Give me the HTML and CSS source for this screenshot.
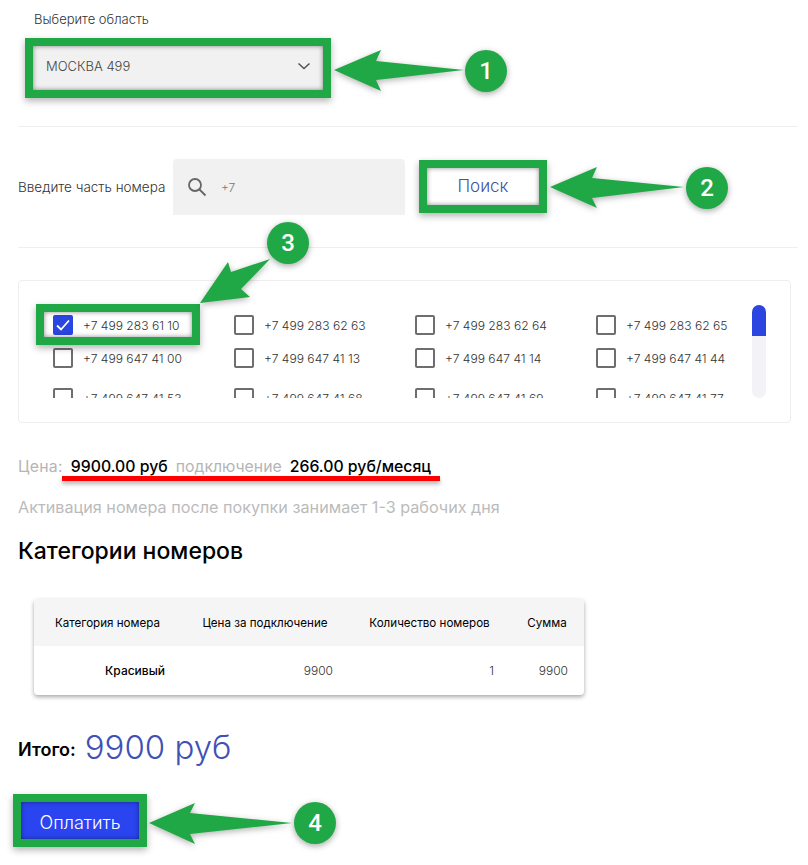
FILE: index.html
```html
<!DOCTYPE html>
<html lang="ru">

<head>
    <meta charset="UTF-8">
    <meta name="viewport" content="width=device-width, initial-scale=1.0">
    <title>Выбор номера</title>
    <link rel="stylesheet" href="styles.css">
</head>

<body>
    <div class="page">
        <div class="region">
            <p class="region-label">Выберите область</p>
            <div class="select marked">
                <span>МОСКВА 499</span>
                <svg class="chevron" width="14" height="8" viewBox="0 0 14 8"><path d="M1.5 1.5 7 6.5l5.5-5" fill="none" stroke="#555" stroke-width="1.5"/></svg>
            </div>
        </div>
        <hr class="divider">
        <div class="search">
            <span class="search-label">Введите часть номера</span>
            <div class="search-input">
                <svg width="20" height="20" viewBox="0 0 20 20"><circle cx="8" cy="8" r="6" fill="none" stroke="#666" stroke-width="1.8"/><path d="m12.5 12.5 6 6" stroke="#666" stroke-width="1.8"/></svg>
                <span>+7</span>
            </div>
            <button class="search-btn marked">Поиск</button>
        </div>
        <hr class="divider">
        <div class="card">
            <div class="numbers">
                <div class="numbers-row">
                    <label class="number"><span class="check checked"><svg width="14" height="12" viewBox="0 0 14 12"><path d="M1 6.5 5 10.5 13 1.5" fill="none" stroke="#fff" stroke-width="1.8"/></svg></span>+7 499 283 61 10</label>
                    <label class="number"><span class="check"></span>+7 499 283 62 63</label>
                    <label class="number"><span class="check"></span>+7 499 283 62 64</label>
                    <label class="number"><span class="check"></span>+7 499 283 62 65</label>
                </div>
                <div class="numbers-row wide">
                    <label class="number"><span class="check"></span>+7 499 647 41 00</label>
                    <label class="number"><span class="check"></span>+7 499 647 41 13</label>
                    <label class="number"><span class="check"></span>+7 499 647 41 14</label>
                    <label class="number"><span class="check"></span>+7 499 647 41 44</label>
                </div>
                <div class="numbers-row">
                    <label class="number"><span class="check"></span>+7 499 647 41 53</label>
                    <label class="number"><span class="check"></span>+7 499 647 41 68</label>
                    <label class="number"><span class="check"></span>+7 499 647 41 69</label>
                    <label class="number"><span class="check"></span>+7 499 647 41 77</label>
                </div>
            </div>
            <div class="scrollbar"><div class="scrollbar-thumb"></div></div>
        </div>
        <p class="price">
            <span>Цена:</span><b>9900.00 руб</b><span>подключение</span><b>266.00 руб/месяц</b>
        </p>
        <p class="note">Активация номера после покупки занимает 1-3 рабочих дня</p>
        <h2 class="title">Категории номеров</h2>
        <div class="table-wrap">
            <table class="table">
                <thead>
                    <tr>
                        <th class="col-1">Категория номера</th>
                        <th class="col-2">Цена за подключение</th>
                        <th class="col-3">Количество номеров</th>
                        <th class="col-4">Сумма</th>
                    </tr>
                </thead>
                <tbody>
                    <tr>
                        <td class="category">Красивый</td>
                        <td>9900</td>
                        <td>1</td>
                        <td>9900</td>
                    </tr>
                </tbody>
            </table>
        </div>
        <div class="total">
            <span class="total-label">Итого:</span>
            <span class="total-sum">9900 руб</span>
        </div>
        <button class="pay marked">Оплатить</button>

        <!-- пометки поверх скриншота -->
        <div class="number-frame marked"></div>
        <svg class="arrows" width="808" height="865" viewBox="0 0 808 865">
            <polygon points="334,70 381,50 376,61 464,70 376,80 381,91"/>
            <polygon points="550,187 597,167 592,178 684,187 592,198 597,208"/>
            <polygon points="200,303 228,262 231,272 270,259 241,289 250,297"/>
            <polygon points="149,823 195,803 190,813 292,823 190,834 195,844"/>
        </svg>
        <div class="step step-1">1</div>
        <div class="step step-2">2</div>
        <div class="step step-3">3</div>
        <div class="step step-4">4</div>
        <div class="underline"></div>
    </div>
</body>

</html>
```

FILE: styles.css
```css
* {
    box-sizing: border-box;
}

body {
    font-family: Inter, "Noto Sans", sans-serif;
    background-color: #fff;
    color: #000;
    margin: 0;
}

.page {
    position: relative;
    width: 808px;
    height: 865px;
    padding: 11px 10px 0 18px;
    overflow: hidden;
}

.marked {
    box-shadow: inset 0 0 5px rgba(0, 0, 0, 0.45), 0 0 0 8px #1fa845, 0 3px 7px 8px rgba(0, 0, 0, 0.3);
}

.region {
    padding-left: 16px;
}

.region-label {
    margin: 0;
    font-size: 13px;
    font-weight: 300;
    line-height: 16px;
    color: #333;
}

.select {
    display: flex;
    justify-content: space-between;
    align-items: center;
    width: 290px;
    height: 44px;
    margin-top: 19px;
    margin-left: -1px;
    padding: 0 12px 5px 13px;
    background-color: #f1f1f1;
    font-size: 13px;
    font-weight: 300;
    color: #444;
}

.divider {
    height: 1px;
    margin: 36px 0 0;
    border: none;
    background-color: #eee;
}

.search {
    display: flex;
    align-items: center;
    height: 56px;
    margin-top: 32px;
}

.search-label {
    width: 155px;
    font-size: 13.5px;
    font-weight: 300;
    white-space: nowrap;
    color: #333;
}

.search-input {
    display: flex;
    align-items: center;
    gap: 14px;
    width: 232px;
    height: 56px;
    padding-left: 14px;
    background-color: #f1f1f1;
    border-radius: 4px 4px 0 0;
    font-size: 12px;
    font-weight: 300;
    color: #777;
}

.search-btn {
    width: 112px;
    height: 37px;
    margin-left: 22px;
    margin-top: -2px;
    padding: 0;
    border: none;
    background-color: #fff;
    font-family: inherit;
    font-size: 17px;
    font-weight: 300;
    color: #3f51a5;
}

.search + .divider {
    margin-top: 32px;
}

.card {
    display: flex;
    justify-content: space-between;
    width: 773px;
    height: 143px;
    margin-top: 32px;
    padding: 24px 24px 24px 34px;
    border: 1px solid #eee;
    border-radius: 4px;
}

.numbers {
    width: 699px;
    height: 93px;
    padding-top: 10px;
    overflow: hidden;
}

.numbers-row {
    display: grid;
    grid-template-columns: repeat(3, 181px) 1fr;
    margin-bottom: 13px;
}

.numbers-row.wide {
    margin-bottom: 20px;
}

.number {
    display: flex;
    align-items: center;
    gap: 10px;
    height: 20px;
    font-size: 12.1px;
    font-weight: 300;
    color: #333;
}

/* рамка вокруг выбранного номера */
.number-frame {
    position: absolute;
    left: 44px;
    top: 312px;
    width: 148px;
    height: 25px;
}

.check {
    flex: none;
    display: flex;
    justify-content: center;
    align-items: center;
    width: 20px;
    height: 20px;
    border: 2px solid #6e6e6e;
    border-radius: 2px;
}

.check.checked {
    border: none;
    background-color: #2a45e0;
}

.scrollbar {
    width: 14px;
    height: 93px;
    border-radius: 7px;
    background-color: #f3f3f7;
    overflow: hidden;
}

.scrollbar-thumb {
    height: 31px;
    background-color: #2a45e0;
}

.price {
    display: flex;
    gap: 8px;
    margin: 35px 0 0;
    font-size: 15.8px;
    line-height: 18px;
    color: #b5b5b5;
}

.price span:first-child {
    letter-spacing: 0.3px;
}

.price b {
    font-weight: 500;
    color: #000;
}

.note {
    margin: 22px 0 0;
    font-size: 16.2px;
    line-height: 18px;
    color: #bbb;
}

.title {
    margin: 20px 0 0;
    font-size: 23px;
    font-weight: 500;
    line-height: 30px;
}

.table-wrap {
    width: 550px;
    margin: 33px 0 0 16px;
    border-radius: 4px;
    box-shadow: 0 2px 4px rgba(0, 0, 0, 0.35);
    overflow: hidden;
}

.table {
    width: 100%;
    table-layout: fixed;
    border-collapse: collapse;
    font-size: 12px;
}

.table th {
    height: 47px;
    padding: 0;
    background-color: #f5f5f5;
    font-size: 11.6px;
    font-weight: 400;
    text-align: center;
}

.table td {
    height: 49px;
    padding: 0 16px 0 0;
    font-weight: 300;
    text-align: right;
    color: #333;
}

.table td.category {
    font-weight: 500;
    color: #000;
}

.col-1 {
    width: 147px;
}

.col-2 {
    width: 168px;
}

.col-3 {
    width: 161px;
}

.col-4 {
    width: 74px;
}

.total {
    display: flex;
    align-items: center;
    gap: 9px;
    margin-top: 30px;
    height: 44px;
}

.total-label {
    padding-top: 4px;
    font-size: 18px;
    font-weight: 600;
}

.total-sum {
    font-size: 33px;
    font-weight: 300;
    color: #3f51b5;
}

.pay {
    display: block;
    width: 118px;
    height: 37px;
    margin: 33px 0 0 3px;
    padding: 3px 0 0;
    border: none;
    background-color: #2a45f0;
    font-family: inherit;
    font-size: 18px;
    font-weight: 300;
    color: #fff;
}

.arrows {
    position: absolute;
    left: 0;
    top: 0;
    fill: #1fa845;
    filter: drop-shadow(0 2px 3px rgba(0, 0, 0, 0.3));
    pointer-events: none;
}

.step {
    position: absolute;
    width: 42px;
    height: 42px;
    border-radius: 50%;
    background-color: #1fa845;
    box-shadow: 0 2px 6px rgba(0, 0, 0, 0.35);
    font-family: Roboto, "Liberation Sans", sans-serif;
    font-size: 24px;
    font-weight: 500;
    line-height: 42px;
    text-align: center;
    color: #fff;
}

.step-1 {
    left: 465px;
    top: 50px;
}

.step-2 {
    left: 686px;
    top: 167px;
}

.step-3 {
    left: 267px;
    top: 222px;
}

.step-4 {
    left: 294px;
    top: 802px;
}

.underline {
    position: absolute;
    left: 62px;
    top: 476px;
    width: 378px;
    height: 5px;
    background-color: #f00;
    box-shadow: 0 3px 4px rgba(0, 0, 0, 0.3);
}
```
